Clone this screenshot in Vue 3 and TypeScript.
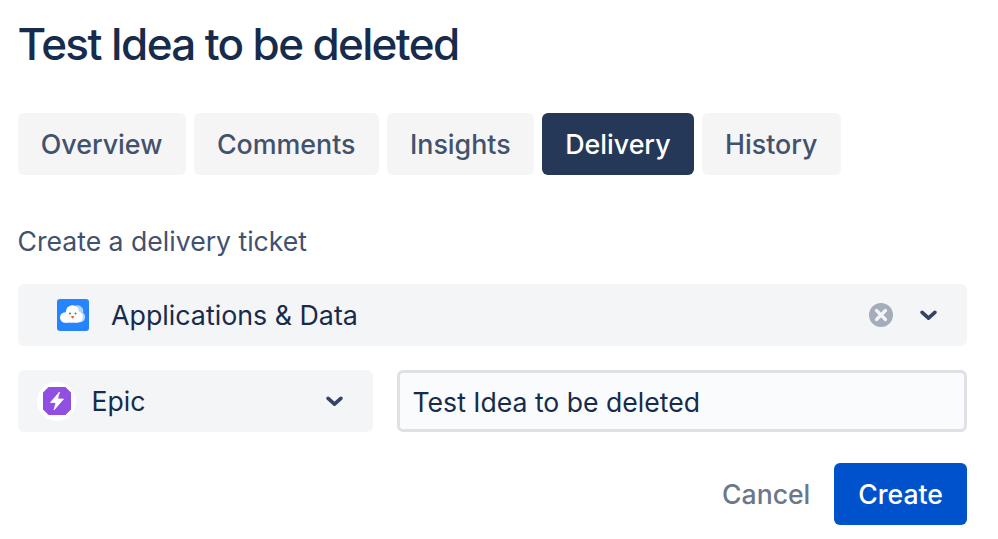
<script setup lang="ts">
const tabs: string[] = ['Overview', 'Comments', 'Insights', 'Delivery', 'History'];
const active = 'Delivery';
</script>

<template>
  <div class="page">
    <h1 class="title">Test Idea to be deleted</h1>
    <div class="tabs">
      <div v-for="t in tabs" :key="t" class="tab" :class="{ active: t === active }">{{ t }}</div>
    </div>
    <div class="label">Create a delivery ticket</div>
    <div class="select project">
      <svg class="proj-icon" viewBox="0 0 32 32" width="32" height="32">
        <rect width="32" height="32" rx="3" fill="#2684ff" />
        <g fill="#b3d4ff">
          <circle cx="20.500" cy="12" r="5.800" />
          <circle cx="23" cy="18" r="5.200" />
        </g>
        <g fill="#fff">
          <circle cx="8.200" cy="18.500" r="5.200" />
          <circle cx="15.500" cy="13" r="6.800" />
          <circle cx="20.500" cy="18" r="5.500" />
          <rect x="8" y="15" width="13" height="8.700" />
        </g>
        <circle cx="13" cy="14.500" r="1" fill="#5e6c84" />
        <circle cx="18.500" cy="14.500" r="1" fill="#5e6c84" />
        <path d="M14.200 17h2.800c0 1.500-.6 2.300-1.400 2.300s-1.400-.8-1.400-2.300z" fill="#ff5630" />
      </svg>
      <span class="proj-name">Applications &amp; Data</span>
      <svg class="clear" viewBox="0 0 24 24" width="24" height="24">
        <circle cx="12" cy="12" r="12" fill="#a5adba" />
        <path d="M7.500 7.500l9 9M16.500 7.500l-9 9" stroke="#f4f5f7" stroke-width="3.200" stroke-linecap="round" />
      </svg>
      <svg class="chev chev-project" viewBox="0 0 16 10" width="17" height="11">
        <path d="M2 2l6 5.500L14 2" fill="none" stroke="#344563" stroke-width="3.400" stroke-linecap="round" stroke-linejoin="round" />
      </svg>
    </div>
    <div class="row">
      <div class="select epic">
        <span class="epic-badge">
          <svg viewBox="0 0 28 28" width="28" height="28">
            <path d="M6 1h16l5 5v16l-5 5H6l-5-5V6z" fill="#904ee2" stroke="#904ee2" stroke-width="2" stroke-linejoin="round" />
            <path d="M16.500 5 7.500 15.500h5.500L11 23l9.500-11h-6z" fill="#fff" stroke="#fff" stroke-width=".8" stroke-linejoin="round" />
          </svg>
        </span>
        <span class="epic-name">Epic</span>
        <svg class="chev" viewBox="0 0 16 10" width="17" height="11">
          <path d="M2 2l6 5.500L14 2" fill="none" stroke="#344563" stroke-width="3.400" stroke-linecap="round" stroke-linejoin="round" />
        </svg>
      </div>
      <input class="input" type="text" value="Test Idea to be deleted" />
    </div>
    <div class="actions">
      <button class="btn cancel" type="button">Cancel</button>
      <button class="btn create" type="button">Create</button>
    </div>
  </div>
</template>

<style>
html, body { margin: 0; background: #fff; }
</style>

<style scoped>
.page {
  width: 998px;
  height: 539px;
  box-sizing: border-box;
  padding: 14px 31px 0 17.500px;
  font-family: Inter, "Liberation Sans", sans-serif;
  overflow: hidden;
}
.title {
  margin: 0;
  font-size: 44px;
  letter-spacing: -1.650px;
  line-height: 60px;
  font-weight: 450;
  color: #172b4d;
}
.tabs {
  display: flex;
  gap: 8px;
  margin-top: 39px;
}
.tab {
  height: 62px;
  box-sizing: border-box;
  padding: 0 23.250px;
  display: flex;
  align-items: center;
  background: #f5f5f6;
  border-radius: 6px;
  font-size: 26.800px;
  font-weight: 500;
  color: #42526e;
}
.tab.active { background: #253858; color: #fff; }
.label {
  margin-top: 49px;
  font-size: 26.600px;
  line-height: 34px;
  color: #42526e;
}
.select {
  height: 62px;
  display: flex;
  align-items: center;
  background: #f4f5f7;
  border-radius: 6px;
  box-sizing: border-box;
  color: #172b4d;
  font-size: 26.600px;
}
.project { margin-top: 26px; padding: 0 30px 0 39px; }
.proj-icon { flex: none; }
.proj-name { margin-left: 22.500px; flex: 1; font-size: 26.800px; }
.chev { flex: none; }
.chev-project { margin-left: 27px; }
.row { display: flex; gap: 24px; margin-top: 24px; }
.epic { width: 355.500px; flex: none; padding: 0 30px 0 19.500px; }
.epic-badge {
  width: 39px;
  height: 39px;
  border-radius: 50%;
  background: #fff;
  display: flex;
  align-items: center;
  justify-content: center;
  flex: none;
}
.epic-name { margin-left: 15.500px; flex: 1; }
.input {
  flex: 1;
  min-width: 0;
  height: 62px;
  box-sizing: border-box;
  border: 3px solid #dfe1e6;
  border-radius: 6px;
  background: #fafbfc;
  padding: 1px 12.500px 0;
  font: 400 26.600px Inter, "Liberation Sans", sans-serif;
  color: #172b4d;
  outline: none;
}
.actions {
  display: flex;
  justify-content: flex-end;
  align-items: center;
  margin-top: 31px;
}
.btn {
  height: 62px;
  border: 0;
  border-radius: 6px;
  font-family: inherit;
  font-size: 26.600px;
  font-weight: 500;
  padding: 0 24px;
}
.cancel { background: transparent; color: #6b778c; }
.create { background: #0052cc; color: #fff; }
</style>
